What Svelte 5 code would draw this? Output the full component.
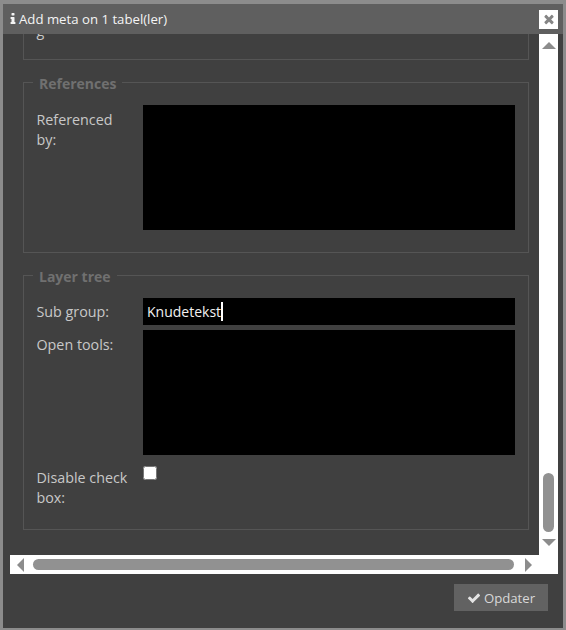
<script lang="ts">
  const tickPath = "M1671 566q0 40-28 68l-724 724-136 136q-28 28-68 28t-68-28l-136-136-362-362q-28-28-28-68t28-68l136-136q28-28 68-28t68 28l294 295 656-657q28-28 68-28t68 28l136 136q28 28 28 68z";
  const closePath = "M1490 1322q0 40-28 68l-136 136q-28 28-68 28t-68-28l-294-294-294 294q-28 28-68 28t-68-28l-136-136q-28-28-28-68t28-68l294-294-294-294q-28-28-28-68t28-68l136-136q28-28 68-28t68 28l294 294 294-294q28-28 68-28t68 28l136 136q28 28 28 68t-28 68l-294 294 294 294q28 28 28 68z";
  const infoPath = "M1216 1344v128q0 26-19 45t-45 19h-512q-26 0-45-19t-19-45v-128q0-26 19-45t45-19h64v-384h-64q-26 0-45-19t-19-45v-128q0-26 19-45t45-19h384q26 0 45 19t19 45v576h64q26 0 45 19t19 45zm-128-1152v192q0 26-19 45t-45 19h-256q-26 0-45-19t-19-45v-192q0-26 19-45t45-19h256q26 0 45 19t19 45z";
</script>

<div class="page">
  <div class="dialog">
    <header class="titlebar">
      <svg class="info" viewBox="0 0 1792 1792"><path d={infoPath} /></svg>
      <span class="title">Add meta on 1 tabel(ler)</span>
      <button type="button" class="close" aria-label="Close">
        <svg viewBox="0 0 1792 1792"><path d={closePath} /></svg>
      </button>
    </header>

    <div class="body">
      <div class="scroller">
        <div class="viewport">
          <div class="content">
            <div class="fieldset clipped">
              <div class="row"><span class="label">g</span></div>
            </div>

            <div class="fieldset refs">
              <span class="legend">References</span>
              <div class="row">
                <span class="label">Referenced by:</span>
                <div class="area"></div>
              </div>
            </div>

            <div class="fieldset tree">
              <span class="legend">Layer tree</span>
              <div class="row">
                <span class="label sub">Sub group:</span>
                <div class="input"><span class="value">Knudetekst</span></div>
              </div>
              <div class="row">
                <span class="label">Open tools:</span>
                <div class="area"></div>
              </div>
              <div class="row">
                <span class="label disable">Disable check box:</span>
                <input class="check" type="checkbox" />
              </div>
            </div>
          </div>
        </div>
        <div class="vbar">
          <span class="tri up"></span>
          <span class="vtrack"><span class="vthumb"></span></span>
          <span class="tri down"></span>
        </div>
      </div>
      <div class="hbar">
        <span class="tri left"></span>
        <span class="hthumb"></span>
        <span class="tri right"></span>
      </div>
    </div>

    <footer class="footer">
      <button type="button" class="update">
        <svg viewBox="0 0 1792 1792"><path d={tickPath} /></svg>
        Opdater
      </button>
    </footer>
  </div>
</div>

<style>
  :global(body) {
    margin: 0;
  }
  .page {
    width: 566px;
    height: 630px;
    box-sizing: border-box;
    padding: 4px 3px 2px 3px;
    background: #8c8c8c;
    font-family: "Open Sans", sans-serif;
    font-size: 14.3px;
    line-height: 20px;
    color: #c8c8c8;
    overflow: hidden;
  }
  .dialog {
    height: 100%;
    display: flex;
    flex-direction: column;
    background: #404040;
  }
  .titlebar {
    height: 30px;
    flex: none;
    display: flex;
    align-items: center;
    padding: 0 5px 0 6px;
    background: #5f5f5f;
    color: #f4f4f4;
    font-size: 13.2px;
  }
  .info {
    width: 14px;
    height: 14px;
    margin-left: -3px;
    margin-right: -1px;
    fill: #f4f4f4;
  }
  .close {
    width: 19px;
    height: 19px;
    margin-left: auto;
    padding: 0;
    border: 0;
    background: #fff;
    display: grid;
    place-items: center;
  }
  .close svg {
    width: 14px;
    height: 14px;
    fill: #858585;
  }
  .body {
    margin: 0 5px 0 7px;
    background: #fff;
  }
  .scroller {
    height: 521px;
    display: flex;
  }
  .viewport {
    flex: 1;
    overflow: hidden;
    background: #404040;
  }
  .content {
    margin-top: -38px;
    padding: 0 10px 0 13px;
  }
  .fieldset {
    position: relative;
    border: 1px solid #555;
    padding: 12px 13px 0 13px;
  }
  .clipped {
    height: 64px;
    padding-top: 0;
    box-sizing: border-box;
  }
  .refs {
    margin-top: 22px;
    height: 171px;
    box-sizing: border-box;
    padding-top: 22px;
  }
  .tree {
    margin-top: 22px;
    height: 255px;
    box-sizing: border-box;
    padding-top: 22px;
  }
  .legend {
    position: absolute;
    left: 9px;
    top: -9px;
    padding: 0 6px;
    background: #404040;
    font-size: 14px;
    font-weight: 700;
    color: #707070;
  }
  .row {
    display: grid;
    grid-template-columns: 106px 372px;
    margin-bottom: 5px;
  }
  .label {
    padding: 5px 10px 0 0;
    margin-left: -0.5px;
    color: #c8c8c8;
  }
  .label.sub {
    padding-top: 4px;
  }
  .label.disable {
    padding-top: 8px;
  }
  .clipped .label {
    padding-top: 24px;
  }
  .area {
    height: 125px;
    background: #000;
  }
  .input {
    height: 27px;
    box-sizing: border-box;
    padding: 4px 5px 0 4px;
    background: #000;
    color: #f2f2f2;
    font-size: 14px;
  }
  .value {
    border-right: 2px solid #fff;
    margin-right: -2px;
    display: inline-block;
    height: 19px;
  }
  .check {
    width: 14px;
    height: 14px;
    margin: 6px 0 0;
  }
  .vbar {
    width: 19px;
    flex: none;
    display: flex;
    flex-direction: column;
    align-items: center;
    padding: 8px 0 9px;
    box-sizing: border-box;
  }
  .vtrack {
    flex: 1;
    width: 11px;
    display: flex;
    flex-direction: column;
    justify-content: flex-end;
    padding-bottom: 7px;
  }
  .vthumb {
    display: block;
    height: 59px;
    border-radius: 6px;
    background: #919191;
  }
  .hbar {
    height: 19px;
    display: flex;
    align-items: center;
    padding: 0 26px 0 7px;
    box-sizing: border-box;
  }
  .hthumb {
    flex: none;
    width: 481px;
    height: 11px;
    margin: 0 11px 0 9px;
    border-radius: 6px;
    background: #919191;
  }
  .tri {
    width: 0;
    height: 0;
    flex: none;
    border-style: solid;
    border-color: transparent;
  }
  .up {
    border-width: 0 7px 7px;
    border-bottom-color: #8c8c8c;
  }
  .down {
    border-width: 7px 7px 0;
    border-top-color: #8c8c8c;
  }
  .left {
    border-width: 7px 7px 7px 0;
    border-right-color: #8c8c8c;
  }
  .right {
    border-width: 7px 0 7px 7px;
    border-left-color: #8c8c8c;
  }
  .footer {
    flex: 1;
    display: flex;
    justify-content: flex-end;
    padding: 10px 15px 0 0;
  }
  .update {
    width: 94px;
    height: 27px;
    padding: 0;
    border: 0;
    background: #626262;
    color: #d8d8d8;
    font: inherit;
    font-size: 13.2px;
    display: flex;
    align-items: center;
    justify-content: center;
    gap: 3px;
  }
  .update svg {
    width: 14px;
    height: 14px;
    fill: #e4e4e4;
  }
</style>
